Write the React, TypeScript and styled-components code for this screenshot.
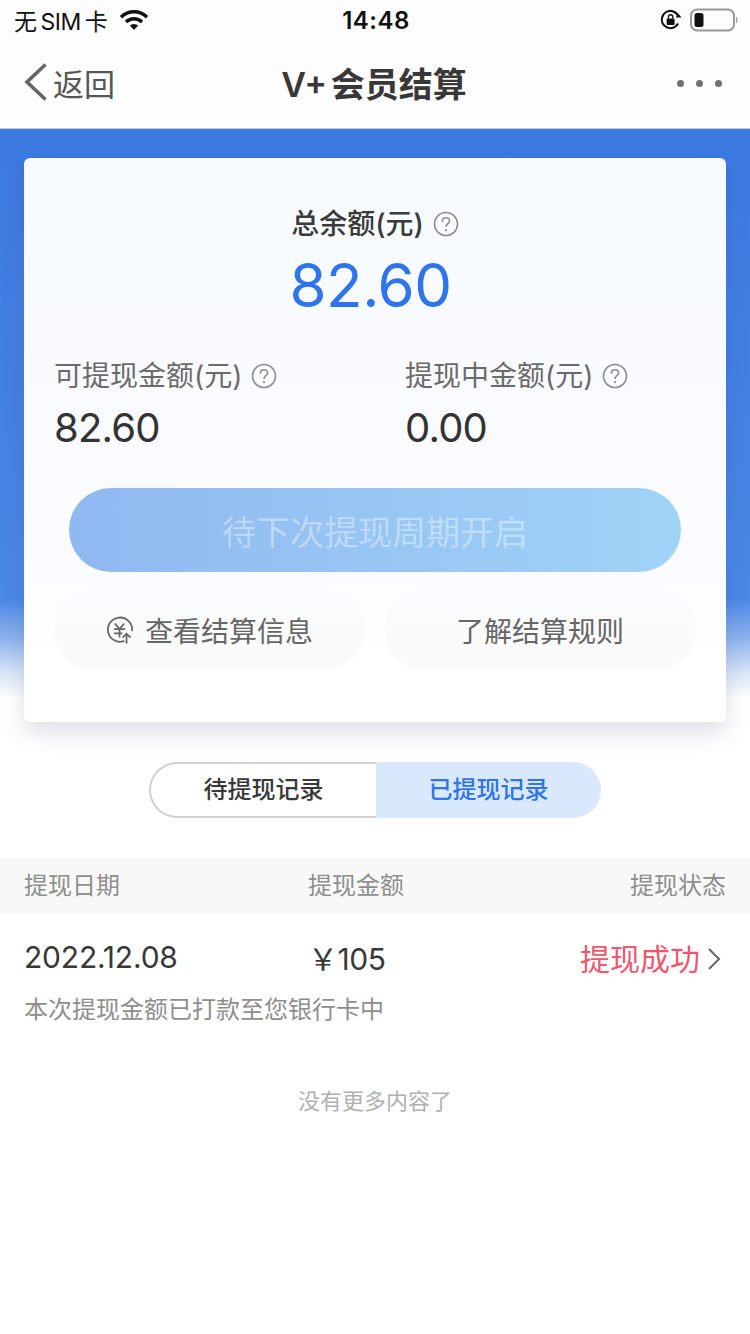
import React from "react";
import styled, { createGlobalStyle } from "styled-components";

const GlobalStyle = createGlobalStyle`
    html, body {
        margin: 0;
        padding: 0;
        background: #ffffff;
    }
    body {
        font-family: "Inter", "Noto Sans CJK SC", sans-serif;
    }
    * {
        box-sizing: border-box;
    }
`;

const Page = styled.div`
    width: 750px;
    height: 1334px;
    overflow: hidden;
    background: #ffffff;
`;

const StatusBar = styled.div`
    height: 40px;
    padding: 0 12px 0 14px;
    display: grid;
    grid-template-columns: 1fr auto 1fr;
    align-items: center;
    background: #fdfdfd;
    color: #111111;
`;

const StatusLeft = styled.div`
    display: flex;
    align-items: center;
    gap: 12px;
    font-size: 23px;
    letter-spacing: -0.5px;
    word-spacing: -2px;
`;

const StatusTime = styled.div`
    font-size: 24px;
    font-weight: 600;
    letter-spacing: 0.5px;
`;

const StatusRight = styled.div`
    display: flex;
    align-items: center;
    justify-content: flex-end;
    gap: 8px;
`;

const NavBar = styled.div`
    height: 89px;
    padding: 0 28px 4px 24px;
    display: grid;
    grid-template-columns: 1fr auto 1fr;
    align-items: center;
    background: #fdfdfd;
    border-bottom: 1px solid #c9c9c9;
`;

const BackLink = styled.div`
    display: flex;
    align-items: center;
    gap: 5px;
    font-size: 31px;
    color: #555555;
`;

const NavTitle = styled.div`
    margin-left: 2px;
    font-size: 34px;
    font-weight: 600;
    color: #383838;
    word-spacing: -5px;
`;

const MoreDots = styled.div`
    display: flex;
    justify-content: flex-end;
    gap: 12px;
    margin-top: 2px;
`;

const Dot = styled.span`
    width: 7px;
    height: 7px;
    border-radius: 50%;
    background: #707070;
`;

const Hero = styled.div`
    padding: 29px 24px 0;
    background: linear-gradient(
            180deg,
            #3b78e0 0,
            #4a88e6 470px,
            #8fb4ee 510px,
            #dbe6f8 545px,
            #ffffff 570px
        )
        no-repeat;
    background-size: 100% 570px;
`;

const Card = styled.div`
    height: 564px;
    padding: 48px 30px 0;
    border-radius: 6px;
    background: linear-gradient(180deg, #f6faff 0%, #fafbff 70%, #ffffff 90%);
    box-shadow: 0 10px 22px rgba(60, 80, 110, 0.18);
`;

const TotalBlock = styled.div`
    display: flex;
    flex-direction: column;
    align-items: center;
`;

const LabelRow = styled.div<{ $strong?: boolean }>`
    display: flex;
    align-items: center;
    gap: 9px;
    font-size: 28px;
    line-height: 36px;
    color: ${(p) => (p.$strong ? "#3a3a3a" : "#6b6b6b")};
    font-weight: ${(p) => (p.$strong ? 500 : 400)};
`;

const TotalAmount = styled.div`
    margin: 8px 9px 0 0;
    font-size: 60px;
    line-height: 70px;
    letter-spacing: -0.5px;
    color: #2e74ea;
`;

const SplitRow = styled.div`
    margin-top: 38px;
    display: grid;
    grid-template-columns: 351px 1fr;
`;

const SplitAmount = styled.div`
    margin-top: 8px;
    font-size: 40px;
    line-height: 52px;
    letter-spacing: -0.8px;
    color: #333333;
`;

const WithdrawButton = styled.div`
    margin: 34px 15px 0;
    height: 84px;
    border-radius: 42px;
    display: flex;
    align-items: center;
    justify-content: center;
    font-size: 34px;
    color: rgba(255, 255, 255, 0.38);
    background: linear-gradient(90deg, #8fb8f0 0%, #a0d3f7 100%);
`;

const ActionRow = styled.div`
    margin-top: 18px;
    display: grid;
    grid-template-columns: 311px 312px;
    justify-content: space-between;
`;

const ActionButton = styled.div`
    height: 80px;
    border-radius: 40px;
    display: flex;
    align-items: center;
    justify-content: center;
    gap: 11px;
    font-size: 28px;
    color: #666666;
    background: linear-gradient(180deg, #fafbfe 0%, #fafafa 100%);
`;

const Tabs = styled.div`
    margin: 40px auto 0;
    width: 452px;
    height: 56px;
    display: flex;
`;

const Tab = styled.div<{ $active?: boolean }>`
    flex: 1;
    padding-bottom: 5px;
    display: flex;
    align-items: center;
    justify-content: center;
    font-size: 24px;
    font-weight: 500;
    ${(p) =>
        p.$active
            ? `
        color: #2e74ea;
        background: #d9e8fd;
        border-radius: 0 28px 28px 0;
    `
            : `
        color: #383838;
        border: 2px solid #d0d0d0;
        border-right: none;
        border-radius: 28px 0 0 28px;
    `}
`;

const TableHead = styled.div`
    margin-top: 40px;
    height: 56px;
    padding: 0 24px 5px;
    display: grid;
    grid-template-columns: 284px 1fr auto;
    align-items: center;
    font-size: 24px;
    color: #8e8e8e;
    background: #f8f8f8;
`;

const RecordRow = styled.div`
    height: 88px;
    padding: 0 24px 3px;
    display: grid;
    grid-template-columns: 284px 1fr auto;
    align-items: center;
    font-size: 30px;
    color: #383838;
`;

const RecordDate = styled.div`
    letter-spacing: -0.2px;
`;

const RecordAmount = styled.div`
    letter-spacing: -0.5px;
`;

const RecordStatus = styled.div`
    display: flex;
    align-items: center;
    gap: 7px;
    margin-right: 5px;
    color: #f0566e;
`;

const StatusChevron = styled.svg`
    margin-top: 4px;
`;

const RecordNote = styled.div`
    margin-top: -9px;
    padding: 0 24px;
    font-size: 24px;
    line-height: 34px;
    color: #8e8e8e;
`;

const EndNote = styled.div`
    margin-top: 57px;
    text-align: center;
    font-size: 22px;
    line-height: 34px;
    color: #b0b0b0;
`;

function HelpIcon() {
    return (
        <svg width="26" height="26" viewBox="0 0 26 26" fill="none">
            <circle cx="13" cy="13" r="11.5" stroke="#8d8d8d" strokeWidth="1.6" />
            <path
                d="M9.4 10.2c0-2.1 1.6-3.4 3.6-3.4s3.6 1.3 3.6 3.1c0 2.6-3.6 2.7-3.6 5.6"
                stroke="#8d8d8d"
                strokeWidth="1.6"
                strokeLinecap="round"
            />
            <circle cx="13" cy="19.2" r="1.1" fill="#8d8d8d" />
        </svg>
    );
}

function App() {
    return (
        <Page>
            <GlobalStyle />
            <StatusBar>
                <StatusLeft>
                    <span>无 SIM 卡</span>
                    <svg width="30" height="22" viewBox="0 0 30 22" fill="none">
                        <path d="M2 8.2a18.4 18.4 0 0 1 26 0" stroke="#111" strokeWidth="3.4" />
                        <path d="M7 13a11.4 11.4 0 0 1 16 0" stroke="#111" strokeWidth="3.4" />
                        <path d="M10.8 16.6 15 21l4.2-4.4a6 6 0 0 0-8.4 0Z" fill="#111" />
                    </svg>
                </StatusLeft>
                <StatusTime>14:48</StatusTime>
                <StatusRight>
                    <svg width="22" height="22" viewBox="0 0 22 22" fill="none">
                        <path d="M18 14.5A8.6 8.6 0 1 1 18.6 8" stroke="#111" strokeWidth="2" />
                        <path d="M15.6 8.4h6l-3-3.4Z" fill="#111" />
                        <rect x="6.6" y="9.6" width="8" height="6.4" rx="1" fill="#111" />
                        <path d="M8.4 9.6V8a2.2 2.2 0 0 1 4.4 0v1.6" stroke="#111" strokeWidth="1.4" />
                    </svg>
                    <svg width="48" height="24" viewBox="0 0 48 24" fill="none">
                        <rect x="1" y="1.5" width="43" height="21" rx="6" stroke="#999" strokeWidth="2" />
                        <rect x="4.5" y="5" width="9" height="14" rx="2.5" fill="#111" />
                        <path d="M46 8.5c1.2.6 1.6 2 1.6 3.5s-.4 2.9-1.6 3.5Z" fill="#aaa" />
                    </svg>
                </StatusRight>
            </StatusBar>
            <NavBar>
                <BackLink>
                    <svg width="24" height="38" viewBox="0 0 24 38" fill="none">
                        <path d="M21.5 1.5 3 19l18.5 17.5" stroke="#666" strokeWidth="3.6" />
                    </svg>
                    <span>返回</span>
                </BackLink>
                <NavTitle>V+ 会员结算</NavTitle>
                <MoreDots>
                    <Dot />
                    <Dot />
                    <Dot />
                </MoreDots>
            </NavBar>
            <Hero>
                <Card>
                    <TotalBlock>
                        <LabelRow $strong>
                            总余额(元)
                            <HelpIcon />
                        </LabelRow>
                        <TotalAmount>82.60</TotalAmount>
                    </TotalBlock>
                    <SplitRow>
                        <div>
                            <LabelRow>
                                可提现金额(元)
                                <HelpIcon />
                            </LabelRow>
                            <SplitAmount>82.60</SplitAmount>
                        </div>
                        <div>
                            <LabelRow>
                                提现中金额(元)
                                <HelpIcon />
                            </LabelRow>
                            <SplitAmount>0.00</SplitAmount>
                        </div>
                    </SplitRow>
                    <WithdrawButton>待下次提现周期开启</WithdrawButton>
                    <ActionRow>
                        <ActionButton>
                            <svg width="28" height="28" viewBox="0 0 30 30" fill="none">
                                <path
                                    d="M19 27A13 13 0 1 1 28 15.5"
                                    stroke="#666"
                                    strokeWidth="1.9"
                                    strokeLinecap="round"
                                />
                                <path
                                    d="m9.5 8 5 6 5-6M8.5 14h12M8.5 18.5h9M14.5 14v9"
                                    stroke="#666"
                                    strokeWidth="1.9"
                                />
                                <path d="M22 29.5V19M17.8 23.2l4.2-4.2 4.2 4.2" stroke="#666" strokeWidth="1.9" />
                            </svg>
                            查看结算信息
                        </ActionButton>
                        <ActionButton>了解结算规则</ActionButton>
                    </ActionRow>
                </Card>
            </Hero>
            <Tabs>
                <Tab>待提现记录</Tab>
                <Tab $active>已提现记录</Tab>
            </Tabs>
            <TableHead>
                <div>提现日期</div>
                <div>提现金额</div>
                <div>提现状态</div>
            </TableHead>
            <RecordRow>
                <RecordDate>2022.12.08</RecordDate>
                <RecordAmount>￥105</RecordAmount>
                <RecordStatus>
                    提现成功
                    <StatusChevron width="14" height="24" viewBox="0 0 14 24" fill="none">
                        <path d="m2 2 10 10L2 22" stroke="#666" strokeWidth="2" />
                    </StatusChevron>
                </RecordStatus>
            </RecordRow>
            <RecordNote>本次提现金额已打款至您银行卡中</RecordNote>
            <EndNote>没有更多内容了</EndNote>
        </Page>
    );
}

export default App;
